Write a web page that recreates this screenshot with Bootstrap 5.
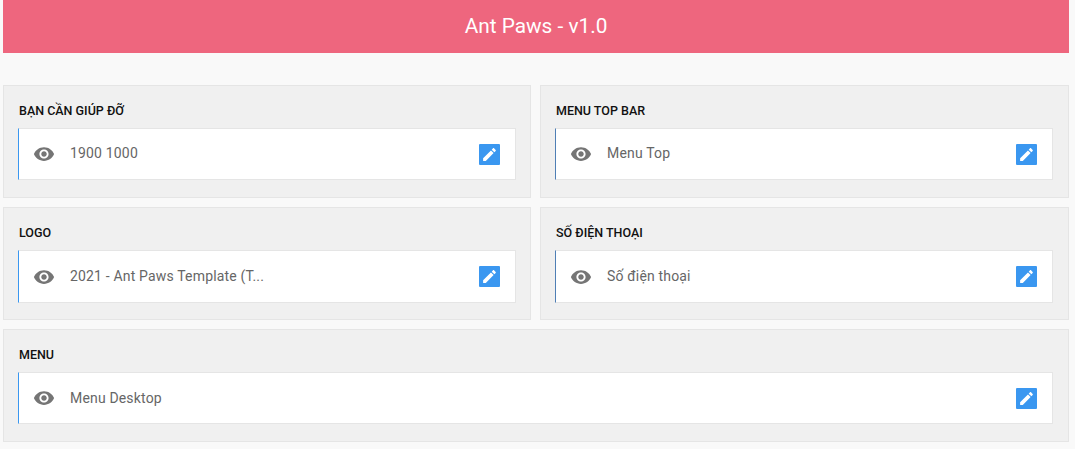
<!DOCTYPE html>
<html lang="vi">
<head>
<meta charset="utf-8">
<title>Ant Paws</title>
<link href="https://cdn.jsdelivr.net/npm/bootstrap@5.3.0/dist/css/bootstrap.min.css" rel="stylesheet">
<style>
html,body{height:100%;overflow:hidden}
body{background:#f9f9f9;font-family:Roboto,"Liberation Sans",sans-serif;padding:0 6px 0 3px}
.app-head{height:53px;background:#ee667e;color:#fff;font-size:20.8px;line-height:53px;text-align:center}
.panel-grid{display:grid;grid-template-columns:528fr 529fr;gap:9px;margin-top:32px}
.panel-box{background:#f0f0f0;border:1px solid #e5e5e5;height:113px;padding:0 15px 0 14px}
.panel-first{padding-right:14px}
.panel-wide{grid-column:1 / 3}
.panel-title{font-size:12.5px;font-weight:500;line-height:14px;height:42px;padding:18px 0 0 1px;margin:0;color:#111;text-transform:uppercase}
.item-row{height:52px;background:#fff;border:1px solid #e5e5e5;border-left:1px solid #3a97f0;padding:0 15px 0 14px}
.item-tall{height:53px}
.item-name{font-size:14px;color:#666;margin-left:15px;letter-spacing:.17px}
.name-up{padding-bottom:2px}
.eye-ico{width:22px;height:22px;fill:#757575}
.edit-btn{width:21px;height:21px;background:#3a97f0;border:0;border-radius:1px;padding:0;margin-left:auto}
.edit-btn svg{width:17px;height:17px;fill:#fff;display:block;margin:auto}
.dark-edge{border-left-color:#4f7fb5}
</style>
</head>
<body>
<div class="app-head">Ant Paws - v1.0</div>
<div class="panel-grid">
  <div class="panel-box panel-first">
    <h2 class="panel-title">Bạn cần giúp đỡ</h2>
    <div class="item-row d-flex align-items-center">
      <svg class="eye-ico" viewBox="0 0 24 24"><path d="M12 4.5C7 4.5 2.73 7.61 1 12c1.73 4.39 6 7.5 11 7.5s9.27-3.11 11-7.5c-1.73-4.39-6-7.5-11-7.5zM12 17c-2.76 0-5-2.24-5-5s2.24-5 5-5 5 2.24 5 5-2.24 5-5 5zm0-8c-1.66 0-3 1.34-3 3s1.34 3 3 3 3-1.34 3-3-1.34-3-3-3z"/></svg>
      <span class="item-name name-up">1900 1000</span>
      <button class="edit-btn" type="button" aria-label="Sửa"><svg viewBox="0 0 24 24"><path d="M3 17.25V21h3.75L17.81 9.94l-3.75-3.75L3 17.25zM20.71 7.04c.39-.39.39-1.02 0-1.41l-2.34-2.34c-.39-.39-1.02-.39-1.41 0l-1.83 1.83 3.75 3.75 1.83-1.83z"/></svg></button>
    </div>
  </div>
  <div class="panel-box">
    <h2 class="panel-title">Menu Top Bar</h2>
    <div class="item-row dark-edge d-flex align-items-center">
      <svg class="eye-ico" viewBox="0 0 24 24"><path d="M12 4.5C7 4.5 2.73 7.61 1 12c1.73 4.39 6 7.5 11 7.5s9.27-3.11 11-7.5c-1.73-4.39-6-7.5-11-7.5zM12 17c-2.76 0-5-2.24-5-5s2.24-5 5-5 5 2.24 5 5-2.24 5-5 5zm0-8c-1.66 0-3 1.34-3 3s1.34 3 3 3 3-1.34 3-3-1.34-3-3-3z"/></svg>
      <span class="item-name name-up">Menu Top</span>
      <button class="edit-btn" type="button" aria-label="Sửa"><svg viewBox="0 0 24 24"><path d="M3 17.25V21h3.75L17.81 9.94l-3.75-3.75L3 17.25zM20.71 7.04c.39-.39.39-1.02 0-1.41l-2.34-2.34c-.39-.39-1.02-.39-1.41 0l-1.83 1.83 3.75 3.75 1.83-1.83z"/></svg></button>
    </div>
  </div>
  <div class="panel-box panel-first">
    <h2 class="panel-title">Logo</h2>
    <div class="item-row item-tall d-flex align-items-center">
      <svg class="eye-ico" viewBox="0 0 24 24"><path d="M12 4.5C7 4.5 2.73 7.61 1 12c1.73 4.39 6 7.5 11 7.5s9.27-3.11 11-7.5c-1.73-4.39-6-7.5-11-7.5zM12 17c-2.76 0-5-2.24-5-5s2.24-5 5-5 5 2.24 5 5-2.24 5-5 5zm0-8c-1.66 0-3 1.34-3 3s1.34 3 3 3 3-1.34 3-3-1.34-3-3-3z"/></svg>
      <span class="item-name">2021 - Ant Paws Template (T...</span>
      <button class="edit-btn" type="button" aria-label="Sửa"><svg viewBox="0 0 24 24"><path d="M3 17.25V21h3.75L17.81 9.94l-3.75-3.75L3 17.25zM20.71 7.04c.39-.39.39-1.02 0-1.41l-2.34-2.34c-.39-.39-1.02-.39-1.41 0l-1.83 1.83 3.75 3.75 1.83-1.83z"/></svg></button>
    </div>
  </div>
  <div class="panel-box">
    <h2 class="panel-title">Số điện thoại</h2>
    <div class="item-row item-tall dark-edge d-flex align-items-center">
      <svg class="eye-ico" viewBox="0 0 24 24"><path d="M12 4.5C7 4.5 2.73 7.61 1 12c1.73 4.39 6 7.5 11 7.5s9.27-3.11 11-7.5c-1.73-4.39-6-7.5-11-7.5zM12 17c-2.76 0-5-2.24-5-5s2.24-5 5-5 5 2.24 5 5-2.24 5-5 5zm0-8c-1.66 0-3 1.34-3 3s1.34 3 3 3 3-1.34 3-3-1.34-3-3-3z"/></svg>
      <span class="item-name">Số điện thoại</span>
      <button class="edit-btn" type="button" aria-label="Sửa"><svg viewBox="0 0 24 24"><path d="M3 17.25V21h3.75L17.81 9.94l-3.75-3.75L3 17.25zM20.71 7.04c.39-.39.39-1.02 0-1.41l-2.34-2.34c-.39-.39-1.02-.39-1.41 0l-1.83 1.83 3.75 3.75 1.83-1.83z"/></svg></button>
    </div>
  </div>
  <div class="panel-box panel-wide">
    <h2 class="panel-title">Menu</h2>
    <div class="item-row d-flex align-items-center">
      <svg class="eye-ico" viewBox="0 0 24 24"><path d="M12 4.5C7 4.5 2.73 7.61 1 12c1.73 4.39 6 7.5 11 7.5s9.27-3.11 11-7.5c-1.73-4.39-6-7.5-11-7.5zM12 17c-2.76 0-5-2.24-5-5s2.24-5 5-5 5 2.24 5 5-2.24 5-5 5zm0-8c-1.66 0-3 1.34-3 3s1.34 3 3 3 3-1.34 3-3-1.34-3-3-3z"/></svg>
      <span class="item-name">Menu Desktop</span>
      <button class="edit-btn" type="button" aria-label="Sửa"><svg viewBox="0 0 24 24"><path d="M3 17.25V21h3.75L17.81 9.94l-3.75-3.75L3 17.25zM20.71 7.04c.39-.39.39-1.02 0-1.41l-2.34-2.34c-.39-.39-1.02-.39-1.41 0l-1.83 1.83 3.75 3.75 1.83-1.83z"/></svg></button>
    </div>
  </div>
</div>
<script src="https://cdn.jsdelivr.net/npm/bootstrap@5.3.0/dist/js/bootstrap.bundle.min.js"></script>
</body>
</html>
